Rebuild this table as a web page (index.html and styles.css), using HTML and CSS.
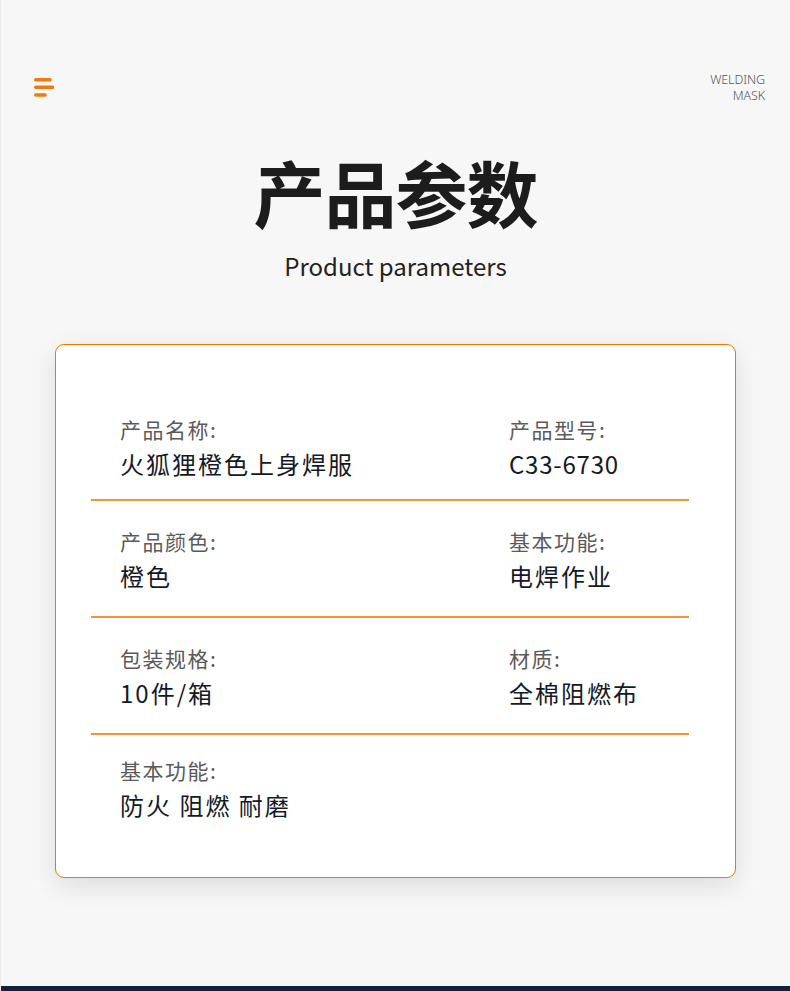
FILE: index.html
```html
<!DOCTYPE html>
<html lang="zh-CN">
<head>
<meta charset="utf-8">
<title>产品参数</title>
<link rel="stylesheet" href="styles.css">
</head>
<body>
<div class="page">
  <header class="topbar">
    <svg class="menu-icon" width="20" height="20" viewBox="0 0 20 20" aria-hidden="true">
      <line x1="1.8" y1="1.8" x2="16" y2="1.8" />
      <line x1="1.8" y1="9.3" x2="18.5" y2="9.3" />
      <line x1="1.8" y1="17" x2="11" y2="17" />
    </svg>
    <div class="brand"><div>WELDING</div><div>MASK</div></div>
  </header>

  <h1 class="title">产品参数</h1>
  <p class="subtitle">Product parameters</p>

  <section class="card">
    <div class="row first">
      <div class="cell">
        <div class="label">产品名称:</div>
        <div class="value">火狐狸橙色上身焊服</div>
      </div>
      <div class="cell">
        <div class="label">产品型号:</div>
        <div class="value num">C33-6730</div>
      </div>
    </div>
    <div class="row">
      <div class="cell">
        <div class="label">产品颜色:</div>
        <div class="value">橙色</div>
      </div>
      <div class="cell">
        <div class="label">基本功能:</div>
        <div class="value">电焊作业</div>
      </div>
    </div>
    <div class="row">
      <div class="cell">
        <div class="label">包装规格:</div>
        <div class="value">10件/箱</div>
      </div>
      <div class="cell">
        <div class="label">材质:</div>
        <div class="value">全棉阻燃布</div>
      </div>
    </div>
    <div class="row last">
      <div class="cell">
        <div class="label">基本功能:</div>
        <div class="value">防火 阻燃 耐磨</div>
      </div>
    </div>
  </section>

  <div class="bottom-bar"></div>
</div>
</body>
</html>
```

FILE: styles.css
```css
* { box-sizing: border-box; }

html, body {
  margin: 0;
  padding: 0;
  background: #f7f7f7;
}

body {
  font-family: "Noto Sans CJK SC", "Noto Sans", sans-serif;
  color: #1a1a1a;
}

.page {
  height: 991px;
  display: flex;
  flex-direction: column;
  border-left: 1px solid #ececec;
  overflow: hidden;
}

.topbar {
  display: flex;
  justify-content: space-between;
  align-items: flex-start;
  padding: 72px 25px 0 33px;
}

.menu-icon {
  margin-top: 6px;
  stroke: #f27a0c;
  stroke-width: 3.6;
  stroke-linecap: round;
}

.brand {
  font-family: "Noto Sans", "Open Sans", sans-serif;
  font-weight: 300;
  font-size: 12.5px;
  line-height: 16px;
  color: #555;
  text-align: right;
  letter-spacing: -0.1px;
}

.title {
  margin: 47px 0 0;
  text-align: center;
  font-size: 72px;
  line-height: 80px;
  font-weight: 700;
  letter-spacing: -1px;
  color: #1c1c1c;
}

.subtitle {
  margin: 20px 0 0;
  text-align: center;
  font-size: 24px;
  line-height: 30px;
  color: #222;
}

.card {
  margin: 63px 0 0 54px;
  width: 681px;
  height: 534px;
  background: #ffffff;
  border: 1px solid #f07800;
  border-radius: 9px;
  box-shadow: 0 8px 26px rgba(0, 0, 0, 0.11);
  padding: 42px 46px 0 35px;
}

.row {
  display: grid;
  grid-template-columns: 389px 1fr;
  padding: 25px 0 24px 29px;
  border-bottom: 2px solid #f29437;
}

.row.first {
  padding-top: 27px;
  padding-bottom: 19px;
}

.row.last {
  border-bottom: none;
  padding-top: 20px;
}

.label {
  font-size: 21px;
  line-height: 30px;
  letter-spacing: 1.5px;
  color: #5a5a5a;
  margin-bottom: 4px;
}

.value {
  font-size: 24px;
  line-height: 32px;
  letter-spacing: 2px;
  color: #131a26;
}

.value.num {
  letter-spacing: 0.8px;
}

.bottom-bar {
  margin-top: auto;
  height: 5px;
  background: #0d2240;
}
```
